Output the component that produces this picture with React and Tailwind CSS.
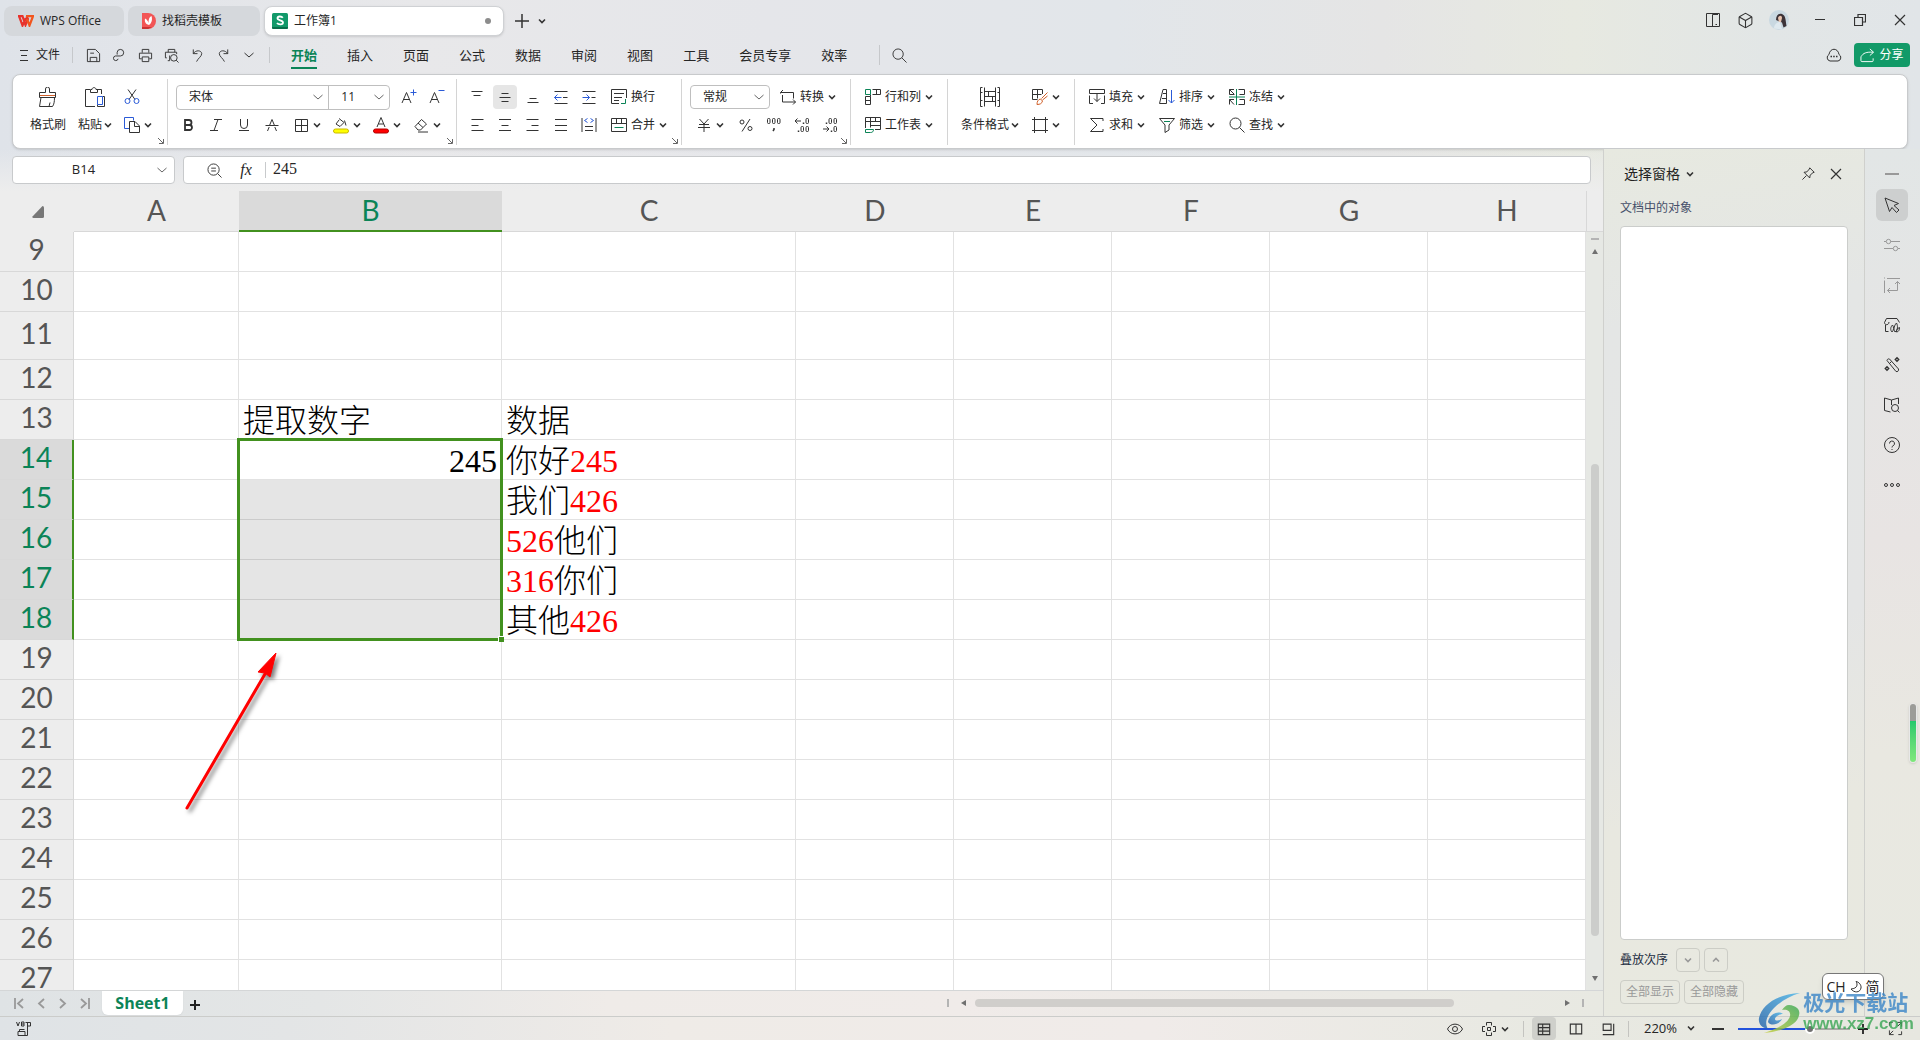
import { Box } from 'lucide-react'
import clsx from 'clsx'

const GREEN = '#0b8457'
const BLUE = '#2b5bd7'
const ORANGE = '#d1602a'

const MENUS = ['开始', '插入', '页面', '公式', '数据', '审阅', '视图', '工具', '会员专享', '效率']

const COLUMNS = [
  { id: 'A', width: 'w-[165px]' },
  { id: 'B', width: 'w-[263px]' },
  { id: 'C', width: 'w-[294px]' },
  { id: 'D', width: 'w-[158px]' },
  { id: 'E', width: 'w-[158px]' },
  { id: 'F', width: 'w-[158px]' },
  { id: 'G', width: 'w-[158px]' },
  { id: 'H', width: 'w-[158px]' },
]

const ROWS = [9, 10, 11, 12, 13, 14, 15, 16, 17, 18, 19, 20, 21, 22, 23, 24, 25, 26, 27]

const red = (t) => <span className="text-[#ff0000]">{t}</span>

const CELLS = {
  B13: '提取数字',
  C13: '数据',
  B14: '245',
  C14: <>你好{red('245')}</>,
  C15: <>我们{red('426')}</>,
  C16: <>{red('526')}他们</>,
  C17: <>{red('316')}你们</>,
  C18: <>其他{red('426')}</>,
}

// Line icons, all on a 16 unit grid unless noted.
const ICONS = {
  save: <path d="M1.5 1.5h8.5l4.5 4.5v8.5h-13zM4.500 14.500v-4.500h7v4.500M4.500 5.500h4" />,
  link: <path d="M5.500 7V4.500a3.500 3.500 0 1 1 3.500 4H3.500a2.500 2.500 0 1 0 3 3" />,
  print: <path d="M4.500 5V1.500h7V5M4 11.500H1.500V5.500h13v6H12M4.500 9.500h7v5h-7z" />,
  preview: (
    <>
      <path d="M4.500 4.500V1.500h7v3M3 10.500H1.500V4.500h12v2M4 13.500h2V8" />
      <circle cx="10.500" cy="10.500" r="3.500" />
      <path d="M13 13l2.500 2.500" />
    </>
  ),
  undo: <path d="M3.500 1.500v4.500h4.500M3.500 6C6 2 12 2 12.500 6c0 3-4 5-5.500 8.500" />,
  redo: <path d="M12.500 1.500v4.500H8M12.500 6C10 2 4 2 3.500 6c0 3 4 5 5.500 8.500" />,
  search: (
    <>
      <circle cx="6.500" cy="6.500" r="5.500" />
      <path d="M10.500 10.500l5 5" />
    </>
  ),
  cut: (
    <>
      <path d="M4 .5l7 10M12 .5L5 10.500" />
      <g stroke={BLUE}>
        <circle cx="3.500" cy="12" r="2.500" />
        <circle cx="12.500" cy="12" r="2.500" />
      </g>
    </>
  ),
  copy: (
    <>
      <path d="M5 11.500H.5V.5h9v3" stroke={BLUE} />
      <path d="M5.500 4.500h5.500l4.500 4.500v6.500h-10zM10.500 4.500v5h5" />
    </>
  ),
  fontUp: (
    <>
      <path d="M1 14L5.500 3.500 10 14M2.500 10.500h6" />
      <path d="M9.500 3.500h6M12.500 .5v6" stroke={BLUE} />
    </>
  ),
  fontDown: (
    <>
      <path d="M1 14L5.500 3.500 10 14M2.500 10.500h6" />
      <path d="M9.500 1.500h6" stroke={BLUE} />
    </>
  ),
  bold: <path strokeWidth="1.800" d="M5 3h4a2.500 2.500 0 0 1 0 5H5zM5 8h4.500a2.500 2.500 0 0 1 0 5H5z" />,
  italic: <path d="M6 2.500h8M2 13.500h8M10 2.500l-4 11" />,
  underline: <path d="M4.500 2v6a3.500 3.500 0 0 0 7 0V2M3 13.500h10" />,
  strike: <path d="M3.500 14l1.700-4M8 2.500L10.500 8.500M8 2.500L5.500 8.500M12.500 14l-1.700-4M1.500 8.500h13" />,
  borders: <path d="M2.500 2.500h12v12h-12zM8.500 2.500v12M2.500 8.500h12" />,
  fill: (
    <>
      <path d="M6 1.500l5 4-4 4-4-2.500 3-4M11.500 3.500l1.500 5" />
      <rect x=".5" y="12" width="15" height="4" rx="2" fill="#ffff00" stroke="#c9b800" />
    </>
  ),
  fontColor: (
    <>
      <path d="M4 10L8 .5 12 10M5.500 7h5" />
      <rect x=".5" y="12" width="15" height="4" rx="2" fill="#ff0000" stroke="#b00000" />
    </>
  ),
  eraser: <path d="M2 9.500L8.500 2.500l5 4.500-6 6H5zM5 6l5 4.500M5 15h10" />,
  top: <path d="M2.500 2.500h11M4.500 6.500h7" />,
  middle: <path d="M4.500 4.500h7M2.500 8.500h11M4.500 12.500h7" />,
  bottom: <path d="M4.500 9.500h7M2.500 13.500h11" />,
  outdent: (
    <>
      <path d="M1.500 2.500h13M10 8.500h4.500M1.500 14.500h13" />
      <path d="M8.500 8.500h-7M4.500 5.500l-3 3 3 3" stroke={BLUE} />
    </>
  ),
  indent: (
    <>
      <path d="M1.500 2.500h13M10.500 8.500h4M1.500 14.500h13" />
      <path d="M1.500 8.500h7M5.500 5.500l3 3-3 3" stroke={BLUE} />
    </>
  ),
  alignLeft: <path d="M2.500 2.500h12M2.500 8.500h7M2.500 13.500h12" />,
  alignCenter: <path d="M2 2.500h12M4.500 8.500h7M2 13.500h12" />,
  alignRight: <path d="M1.500 2.500h12M6.500 8.500h7M1.500 13.500h12" />,
  justify: <path d="M2 2.500h12M2 8.500h12M2 13.500h12" />,
  distribute: (
    <>
      <path d="M1 1v14M15 1v14M4 9.500h8M4 13.500h8" />
      <path d="M6.500 1.500l-3 2 3 2M9.500 1.500l3 2-3 2" stroke={BLUE} />
    </>
  ),
  wrap: (
    <>
      <path d="M8 14.500H.5V.5h15V9M3 4.500h10M3 8.500h8M3 11.500h5" />
      <path d="M14.500 10v4.500H10" stroke={GREEN} />
    </>
  ),
  merge: (
    <>
      <path d="M.5 1.500h15v13H.5zM.5 6.500h15M5.500 1.500v5M10.500 1.500v5" />
      <path d="M3.500 10.500h9" stroke={GREEN} />
    </>
  ),
  convert: <path d="M3 1L.5 3.500h13v6M.5 3.500v1M2.500 6v7h13M13 10.500l2.500 2.500L13 15.500" />,
  yen: <path d="M3.500 2L8 7l4.500-5M3 7.500h10M2 10.500h12M8 7.500V15" />,
  percent: (
    <>
      <circle cx="4" cy="5" r="2" />
      <circle cx="12" cy="11.500" r="2" />
      <path d="M12 2L4 14.500" />
    </>
  ),
  thousand: (
    <>
      <rect x="1.500" y="1.500" width="2.500" height="5" rx="1" />
      <rect x="6.500" y="1.500" width="2.500" height="5" rx="1" />
      <rect x="11.500" y="1.500" width="2.500" height="5" rx="1" />
      <path d="M8 11v1.500l-1 1.500" strokeWidth="1.500" />
    </>
  ),
  decimalUp: (
    <>
      <path d="M7 4H1M3.500 1.500L1 4l2.500 2.500" />
      <path d="M9.500 5.500v1.500M4.500 13.500v1.500" strokeWidth="1.500" />
      <rect x="12" y="1.500" width="2.500" height="5" rx="1" />
      <rect x="7" y="9.500" width="2.500" height="5" rx="1" />
      <rect x="12" y="9.500" width="2.500" height="5" rx="1" />
    </>
  ),
  decimalDown: (
    <>
      <path d="M1 12h6M4.500 9.500L7 12l-2.500 2.500" />
      <path d="M4.500 5.500v1.500M9.500 13.500v1.500" strokeWidth="1.500" />
      <rect x="7" y="1.500" width="2.500" height="5" rx="1" />
      <rect x="12" y="1.500" width="2.500" height="5" rx="1" />
      <rect x="12" y="9.500" width="2.500" height="5" rx="1" />
    </>
  ),
  rowCol: (
    <>
      <path d="M7.500 .5h8v5h-8M11.500 .5v5M.5 7.500h5v8h-5zM.5 11.500h5M5.500 5.500v2" />
      <path d="M.5 .5h5v5h-5z" stroke={GREEN} />
    </>
  ),
  worksheet: (
    <>
      <path d="M.5 11V.5h15v12H10M.5 4.500h15M5.500 .5v10M5.500 8.500h10M10.500 .5v4" />
      <path d="M.5 12.500h8c0 2-1 3-3 3h-5z" stroke={GREEN} />
    </>
  ),
  tableStyle: (
    <>
      <path d="M10.500 5V.5H.5v10h5M.5 5.500h9M5.500 .5v9" />
      <path d="M15.500 3.500l-6 6M15.500 7l-5 4M5 15.500c0-3 1-5 3.500-5.500l2 2c-.5 2.500-2.500 3.500-5.500 3.500z" stroke={ORANGE} />
    </>
  ),
  frame: <path d="M2.500 0v16M13.500 0v16M0 2.500h16M0 13.500h16" />,
  fillDown: <path d="M.5 4.500v-4h15v4M.5 4.500h15M4 14.500H.5v-8M12 14.500h3.500v-8M8 4.500v8M5 9.500l3 3 3-3" />,
  sum: <path d="M14 4V1.500H1.500L8 8l-6.500 6.500H14V12" />,
  sort: (
    <>
      <path d="M.5 14.500L4 .5h3.500v14zM4 4.500h3.500M3 9.500h4.500" />
      <path d="M12.500 1v13M9.500 11l3 3 3-3" stroke={BLUE} />
    </>
  ),
  filter: (
    <>
      <path d="M.5 1.500h15L10 8v5l-4 2.500V8z" />
      <path d="M5 4.500h6" stroke={GREEN} />
    </>
  ),
  freeze: (
    <>
      <path d="M5 .5H.5v5H5M.5 .5l5 5M5 10.500H.5v5M.5 10.500l4.500 5M9.500 .5h6v5h-5M9.500 15.500h6v-5h-5" />
      <path d="M7.500 0v16M0 8h16" stroke={GREEN} />
    </>
  ),
  panel: <path d="M1.500 1.500h13v13h-13zM7.500 14.500v-12h5.500M10.500 12.500h1.500" />,
  cloud: (
    <>
      <path d="M4 14a3.500 3.500 0 0 1-1-6.500C4 .5 12 .5 13 7.500A3.500 3.500 0 0 1 12 14z" />
      <path d="M4.500 9.500h1.500M7.200 9.500h1.500M10 9.500h1.500" strokeWidth="1.500" />
    </>
  ),
  share: <path d="M1 9v4.500a1 1 0 0 0 1 1h11a1 1 0 0 0 1-1V11M1.500 9C3 5.500 7 4 14 4.500M10.500 1l4 3.500-4 3.500" />,
  pin: <path strokeWidth="1.200" d="M9.500 1l5.500 5.500-1.500.5-3.500 3-.5 3.500L2.500 6.500 6 6l3-3.500zM5.500 10.500l-5 5" />,
  pointer: <path d="M1 1l4.500 13.500 2.500-4 4.500 5 2.500-2.500-5-4.500 4.500-2z" />,
  sliders: (
    <>
      <path d="M0 4.500h2M6.500 4.500H16M0 11.500h9M14 11.500h2" />
      <circle cx="4.500" cy="4.500" r="2.200" />
      <circle cx="11.500" cy="11.500" r="2.200" />
    </>
  ),
  resize: <path d="M3 1.500h13M.5 3.500V16M0 1h1M13.500 4.500v9h-10M11 7l2.500-2.500L16 7M6 11l-2.500 2.500L6 16" />,
  store: (
    <>
      <path d="M1.500 8v6.500h3M.5 5.500L2.500 1.500h10.500l2.500 4M.5 5.500c0 3 4.500 3 4.500-.5" />
      <path d="M8.500 8c-2 2-2.500 5-.5 7 2-2 2-5 .5-7zM12.500 6c-2 2-3.500 6-1.500 9 3-2 3-6 1.500-9zM15.500 10.500c-2 .5-3 2.500-3 4.500 2 0 3-2 3-4.500z" />
    </>
  ),
  wand: (
    <>
      <path d="M3 3.500a1.800 1.800 0 0 1 2.500-1.500l9 10c.5 2-1 3-2.500 2.500zM5.500 6.500l2-2" />
      <path d="M13 .8l1.700 1.700-1.700 1.700-1.700-1.700zM3 9.800l1.700 1.700L3 13.200l-1.700-1.700z" strokeWidth="1.400" />
    </>
  ),
  book: (
    <>
      <path d="M6.500 15l-6-1.500V1l7 2 7-2v6M7.500 3v5" />
      <circle cx="11" cy="11" r="3.500" />
      <path d="M13.500 13.500l2 2" />
    </>
  ),
  help: (
    <>
      <circle cx="8" cy="8" r="7.500" />
      <path d="M5.500 6.500a2.500 2.500 0 1 1 3.500 2.300c-.7.400-1 .7-1 1.700M8 12v1" />
    </>
  ),
  more: (
    <>
      <circle cx="2" cy="8" r="1.500" />
      <circle cx="8" cy="8" r="1.500" />
      <circle cx="14" cy="8" r="1.500" />
    </>
  ),
  zoomOut: (
    <>
      <circle cx="7" cy="7" r="6" />
      <path d="M4.500 5.500h5M4.500 8.500h5M11.500 11.500l4 4" />
    </>
  ),
  macro: <path d="M.5 1l1.500 4 1.500-4M5.500 1v4H8V1zM5.500 3H8M9.500 1.500h5V5H12M11.500 2v12.500H2v-4h7v4M3.500 10.500v-2h5" />,
  eye: (
    <>
      <path d="M.5 8C3.500 1.500 12.500 1.500 15.500 8 12.500 14.500 3.500 14.500 .5 8z" />
      <circle cx="8" cy="8" r="2.500" />
    </>
  ),
  reading: <path d="M5.500 4.500v-3h5v3M5.500 11.500v3h5v-3M4 5.500H1.500v5H4M12 5.500h2.500v5H12M6.500 6.500h3v3h-3z" />,
  normal: <path strokeWidth="1.300" d="M1.500 2.500h13v12h-13zM1.500 6.500h13M6.500 2.500v12M1.500 10.500h13" />,
  pageView: <path strokeWidth="1.300" d="M1.500 2.500h13v11h-13zM8 2.500v11" />,
  breakView: <path strokeWidth="1.300" d="M2.500 2.500h9v7h-9zM14.500 2v12.500H2" />,
  full: <path d="M10 1.500h4.500V6M14.500 1.500l-4 4M6 14.500H1.500V10M1.500 14.500l4-4M1.500 5V1.500H5M14.500 11v3.500H11" />,
}

function Icon({ name, size = 'size-4', color = '#333' }) {
  return (
    <svg viewBox="0 0 16 16" className={clsx('shrink-0 overflow-visible', size)} fill="none" stroke={color}>
      {ICONS[name]}
    </svg>
  )
}

function Chevron({ thin, up, color = '#333' }) {
  const d = up ? 'M1 5.500l3-3 3 3' : 'M1 2.500l3 3 3-3'
  return (
    <svg viewBox="0 0 8 8" className="size-2 shrink-0 overflow-visible" fill="none" stroke={color} strokeWidth={thin ? 1 : 1.6}>
      <path d={thin ? 'M-.5 2l4.500 4 4.500-4' : d} />
    </svg>
  )
}

function Tool({ name, label, text, menu, className }) {
  return (
    <button aria-label={label || text} className={clsx('flex h-7 items-center gap-1 whitespace-nowrap', className)}>
      <Icon name={name} />
      {text}
      {menu && <Chevron />}
    </button>
  )
}

function Cell28({ name, label, active }) {
  return (
    <button
      aria-label={label}
      className={clsx('mx-0.5 flex size-6 items-center justify-center rounded', active && 'bg-[#e6e6e6]')}
    >
      <Icon name={name} />
    </button>
  )
}

function Group({ children, className, corner }) {
  return (
    <div className={clsx('relative flex h-[66px] shrink-0 border-r border-[#d4d4d4] pt-1', className)}>
      {children}
      {corner && (
        <button aria-label="更多设置" className="absolute right-0.5 bottom-0 flex size-2">
          <svg viewBox="0 0 8 8" className="size-2" fill="none" stroke="#666">
            <path d="M1 1l5 5M6.500 2v4.500H2" />
          </svg>
        </button>
      )}
    </div>
  )
}

function Select({ label, value, className }) {
  return (
    <div className={clsx('relative flex h-6 items-center', className)}>
      <select aria-label={label} className="h-full w-full appearance-none bg-transparent pl-3 text-xs outline-none">
        <option>{value}</option>
      </select>
      <span className="pointer-events-none absolute right-1.5 flex">
        <Chevron thin color="#666" />
      </span>
    </div>
  )
}

function TitleBar() {
  return (
    <div className="flex h-9 items-end">
      <div className="flex h-[30px] gap-1 pl-1">
        <button className="flex w-[120px] items-center gap-1.5 rounded-lg bg-[#d5d8dc] pl-3.5">
          <svg viewBox="0 0 16 12" className="h-3 w-4" fill="none" strokeWidth="2.200">
            <path d="M0 1.200h4.500L7.500 10 10 4l-1.500-2.800M1 1l3.500 9.500L8 3" stroke="#e8322c" />
            <path d="M8 1.200h7L11.500 10.500 9 4" stroke="#f2551d" />
          </svg>
          WPS Office
        </button>
        <button className="flex w-[132px] items-center gap-1.5 rounded-lg bg-[#d5d8dc] pl-3.5">
          <svg viewBox="0 0 14 16" className="h-4 w-3.5">
            <path d="M0 0h6a8 8 0 0 1 0 16H0z" fill="#f25555" />
            <path d="M0 14h10l-4 2H0z" fill="#c93232" />
            <path d="M7 12C3 11 2.500 8 3 5.500 5 6.500 6 8 6.500 10 6.500 7 7 4 9.500 3c1 3 .5 7-2.500 9z" fill="#fff" />
          </svg>
          找稻壳模板
        </button>
        <div className="flex w-[240px] items-center gap-1.5 rounded-lg border border-[#cfd1d4] bg-white pr-3 pl-[7px] shadow-sm">
          <svg viewBox="0 0 16 16" className="size-4">
            <rect width="16" height="16" rx="1.500" fill="#12996a" />
            <path d="M0 14h16v.5a1.500 1.500 0 0 1-1.500 1.500h-13A1.500 1.500 0 0 1 0 14.500z" fill="#0a6e4b" />
            <path d="M10.800 4.800C9.500 3 5.500 3 5.500 5.300c0 2.500 5.500 1.500 5.500 4.200 0 2.500-4.500 2.500-6 .5" fill="none" stroke="#fff" strokeWidth="1.800" />
          </svg>
          <span>工作簿1</span>
          <span className="ml-auto size-1.5 rounded-full bg-[#8c8c8c]" />
        </div>
      </div>
      <div className="flex h-[30px] items-center pl-[11px]">
        <button aria-label="新建标签">
          <svg viewBox="0 0 14 14" className="size-3.5" stroke="#333" strokeWidth="1.500">
            <path d="M7 0v14M0 7h14" />
          </svg>
        </button>
        <button aria-label="标签列表" className="ml-[9px]">
          <Chevron />
        </button>
      </div>
      <div className="ml-auto flex h-8 items-center">
        <button aria-label="分屏" className="flex w-8 justify-center">
          <Icon name="panel" />
        </button>
        <button aria-label="应用" className="flex w-8 justify-center">
          <Box size={17} strokeWidth={1.5} color="#333" />
        </button>
        <button aria-label="账户" className="flex w-9 justify-center">
          <svg viewBox="0 0 20 20" className="size-5">
            <circle cx="10" cy="10" r="10" fill="#c9d8e1" />
            <path d="M7 10C7 5 10 3 13 4c3.500 1.500 3.500 5 4.500 12l-3 1.500-1.500-5z" fill="#3c3338" />
            <path d="M9 8c1-3 4-3 4 0l-1 4-2 .5z" fill="#e8c4b0" />
            <path d="M5 18.500c0-4 3-6.500 6-6.500l2 7.500z" fill="#dfe9ef" />
          </svg>
        </button>
        <button aria-label="最小化" className="ml-[3px] flex w-10 justify-center">
          <svg viewBox="0 0 10 10" className="size-2.5" stroke="#333"><path d="M0 4.500h10" /></svg>
        </button>
        <button aria-label="还原" className="flex w-10 justify-center">
          <svg viewBox="0 0 12 12" className="size-3" fill="none" stroke="#333" strokeWidth="1.200">
            <path d="M.5 3.500h8v8h-8zM4 3.500v-3h7.500v7.500h-3" />
          </svg>
        </button>
        <button aria-label="关闭" className="flex w-10 justify-center">
          <CloseIcon />
        </button>
      </div>
    </div>
  )
}

function CloseIcon() {
  return (
    <svg viewBox="0 0 10 10" className="size-2.5 overflow-visible" stroke="#333" strokeWidth="1.200">
      <path d="M0 0l10 10M10 0L0 10" />
    </svg>
  )
}

function MenuBar() {
  const quick = [
    ['save', '保存'],
    ['link', '输出'],
    ['print', '打印'],
    ['preview', '打印预览'],
    ['undo', '撤销'],
    ['redo', '恢复'],
  ]
  return (
    <div className="flex h-[38px] items-center pr-2.5 pl-5">
      <button className="flex items-center gap-2">
        <svg viewBox="0 0 8 12" className="h-3 w-2" stroke="#333"><path d="M0 1.500h8M1 6.500h6M0 11.500h8" /></svg>
        文件
      </button>
      <span className="ml-3 h-4 w-px bg-[#c6c8cb]" />
      <div className="ml-[7px] flex">
        {quick.map(([name, label]) => (
          <button key={name} aria-label={label} className="flex w-[26px] justify-center">
            <Icon name={name} size="size-[15px]" />
          </button>
        ))}
        <button aria-label="自定义" className="flex w-[26px] items-center justify-center">
          <Chevron thin />
        </button>
      </div>
      <span className="ml-[7px] h-4 w-px bg-[#c6c8cb]" />
      <nav className="ml-[21px] flex gap-[30px] text-[13px] leading-5">
        {MENUS.map((m, i) => (
          <button
            key={m}
            className={clsx('border-b-2 pt-1 pb-0.5', i === 0 ? 'border-[#0b8457] font-bold text-[#0b8457]' : 'border-transparent')}
          >
            {m}
          </button>
        ))}
      </nav>
      <span className="ml-8 h-5 w-px bg-[#c6c8cb]" />
      <button aria-label="搜索" className="ml-3">
        <Icon name="search" size="size-[15px]" />
      </button>
      <div className="ml-auto flex items-center gap-3">
        <button aria-label="云同步"><Icon name="cloud" /></button>
        <button className="flex h-6 w-14 items-center justify-center gap-1 rounded bg-[#129a68] text-white">
          <Icon name="share" color="#fff" size="size-[15px]" />
          分享
        </button>
      </div>
    </div>
  )
}

function Ribbon() {
  return (
    <div className="mx-3 flex h-[75px] items-start overflow-hidden rounded-lg border border-[#c8cacc] bg-white pt-1 shadow">
      <Group corner className="w-[155px] pl-[17px]">
        <button className="flex w-9 flex-col items-center whitespace-nowrap">
          <svg viewBox="0 0 20 20" className="m-1 size-5" fill="none" stroke="#333">
            <path d="M1.500 5.500h6V2a2 2 0 0 1 4 0v3.500h6v5h-16zM3 10.500L1.500 19.500h13c1.500-2 2-5 2-9M11 19.500l1-4" />
            <path d="M2 8.500h15" stroke={ORANGE} />
          </svg>
          <span className="leading-7">格式刷</span>
        </button>
        <button className="ml-3 flex w-[34px] flex-col items-center whitespace-nowrap">
          <svg viewBox="0 0 20 20" className="m-1 size-5" fill="none" stroke="#333">
            <path d="M5 2.500H.5v17H10M12 2.500h4.500V7M5.500 5.500v-3H7c0-2.500 4-2.500 4 0h1.500v3z" />
            <path d="M17.500 9.500h2v10h-7v-2" />
            <path d="M12.500 9.500h5v8h-5z" stroke={BLUE} />
          </svg>
          <span className="flex items-center gap-0.5 leading-7">粘贴<Chevron /></span>
        </button>
        <div className="ml-3 flex flex-col">
          <Tool name="cut" label="剪切" />
          <Tool name="copy" label="复制" menu />
        </div>
      </Group>

      <Group corner className="w-[289px] flex-col pl-1.5">
        <div className="flex h-7 items-center">
          <div className="ml-0.5 flex h-[25px] w-[214px] items-center rounded border border-[#bfbfbf]">
            <Select label="字体" value="宋体" className="w-[152px]" />
            <Select label="字号" value="11" className="w-[61px] border-l border-[#bfbfbf]" />
          </div>
          <span className="w-[5px]" />
          <Cell28 name="fontUp" label="增大字号" />
          <Cell28 name="fontDown" label="减小字号" />
        </div>
        <div className="flex h-7 items-center">
          <Cell28 name="bold" label="加粗" />
          <Cell28 name="italic" label="倾斜" />
          <Cell28 name="underline" label="下划线" />
          <Cell28 name="strike" label="删除线" />
          <div className="ml-[7px] flex gap-3">
            <Tool name="borders" label="边框" menu />
            <Tool name="fill" label="填充颜色" menu />
            <Tool name="fontColor" label="字体颜色" menu />
            <Tool name="eraser" label="清除" menu />
          </div>
        </div>
      </Group>

      <Group corner className="w-[225px] flex-col pl-1.5">
        <div className="flex h-7 items-center">
          <Cell28 name="top" label="顶端对齐" />
          <Cell28 name="middle" label="垂直居中" active />
          <Cell28 name="bottom" label="底端对齐" />
          <Cell28 name="outdent" label="减少缩进" />
          <Cell28 name="indent" label="增加缩进" />
          <Tool name="wrap" text="换行" className="ml-2" />
        </div>
        <div className="flex h-7 items-center">
          <Cell28 name="alignLeft" label="左对齐" />
          <Cell28 name="alignCenter" label="水平居中" />
          <Cell28 name="alignRight" label="右对齐" />
          <Cell28 name="justify" label="两端对齐" />
          <Cell28 name="distribute" label="分散对齐" />
          <Tool name="merge" text="合并" menu className="ml-2" />
        </div>
      </Group>

      <Group corner className="w-[169px] flex-col pl-2">
        <div className="flex h-7 items-center">
          <Select label="数字格式" value="常规" className="w-20 rounded border border-[#bfbfbf]" />
          <Tool name="convert" text="转换" menu className="ml-2.5" />
        </div>
        <div className="flex h-7 items-center">
          <Tool name="yen" label="货币" menu className="ml-1.5" />
          <span className="w-2" />
          <Cell28 name="percent" label="百分比" />
          <Cell28 name="thousand" label="千位分隔" />
          <Cell28 name="decimalUp" label="增加小数位" />
          <Cell28 name="decimalDown" label="减少小数位" />
        </div>
      </Group>

      <Group className="w-[97px] flex-col pl-3.5">
        <Tool name="rowCol" text="行和列" menu />
        <Tool name="worksheet" text="工作表" menu />
      </Group>

      <Group className="w-[127px] pl-[13px]">
        <button className="flex w-[58px] flex-col items-center whitespace-nowrap">
          <svg viewBox="0 0 20 20" className="m-1 size-5" fill="none" stroke="#333">
            <path d="M2.500 .5h-2v19h2M17.500 .5h2v19h-2M.5 5.500h2M17.500 5.500h2M.5 13.500h2M17.500 13.500h2M4.500 .5v19M15.500 .5v19M4.500 4.500h11M4.500 9.500h11M4.500 14.500h11M8.500 4.500v5M12.500 9.500v5" />
          </svg>
          <span className="flex items-center gap-0.5 leading-7">条件格式<Chevron /></span>
        </button>
        <div className="ml-[13px] flex flex-col">
          <Tool name="tableStyle" label="表格样式" menu />
          <Tool name="frame" label="单元格样式" menu />
        </div>
      </Group>

      <div className="grid h-[66px] grid-cols-3 content-start gap-x-3.5 pt-1 pl-3.5">
        <Tool name="fillDown" text="填充" menu />
        <Tool name="sort" text="排序" menu />
        <Tool name="freeze" text="冻结" menu />
        <Tool name="sum" text="求和" menu />
        <Tool name="filter" text="筛选" menu />
        <Tool name="search" text="查找" menu />
      </div>
    </div>
  )
}

function FormulaBar() {
  return (
    <div className="flex h-[42px] shrink-0 gap-2 bg-linear-to-b from-transparent to-[#ededed] pt-[7px] pr-3 pl-3">
      <div className="relative flex h-7 w-[163px] items-center rounded border border-[#c8cacc] bg-white">
        <input aria-label="名称框" defaultValue="B14" className="w-full pr-5 text-center text-[13px] outline-none" />
        <span className="absolute right-2 flex"><Chevron thin color="#666" /></span>
      </div>
      <div className="flex h-7 flex-1 items-center rounded border border-[#c8cacc] bg-white pl-[23px]">
        <button aria-label="浏览公式结果"><Icon name="zoomOut" size="size-[15px]" /></button>
        <button aria-label="插入函数" className="ml-4 w-4 font-['Liberation_Serif',serif] text-base leading-5 italic">fx</button>
        <span className="ml-[11px] h-4 w-px bg-[#c8cacc]" />
        <input
          aria-label="编辑栏"
          defaultValue="245"
          className="ml-[7px] min-w-0 flex-1 pb-0.5 font-['Liberation_Serif',serif] text-base leading-5 outline-none"
        />
      </div>
    </div>
  )
}

function Cell({ col, row }) {
  const id = col + row
  const shaded = col === 'B' && row > 14 && row <= 18
  return (
    <td
      className={clsx(
        'relative border-r border-b px-1 pt-[3px] pb-0 align-middle whitespace-nowrap',
        shaded ? 'border-[#cbcbcb] bg-[#e5e5e5]' : 'border-[#e2e2e2]',
        id === 'B14' && 'text-right',
      )}
    >
      {CELLS[id]}
      {id === 'B14' && (
        <span className="pointer-events-none absolute -top-0.5 -left-0.5 z-10 h-[203px] w-[266px] border-[3px] border-[#42911f]">
          <span className="absolute -right-1 -bottom-1 size-1.5 border-t border-l border-white bg-[#42911f]" />
        </span>
      )}
    </td>
  )
}

function Grid() {
  return (
    <div className="relative min-w-0 flex-1 overflow-hidden bg-white">
      <table className="w-[1586px] table-fixed border-separate border-spacing-0 font-['Liberation_Serif','Noto_Sans_CJK_SC',serif] text-[32px] leading-9 font-light text-black">
        <thead className="font-['Lato',sans-serif] text-[28px] font-normal">
          <tr className="h-[41px] bg-[#ededed]">
            <th className="w-[74px]">
              <svg viewBox="0 0 12 12" className="ml-8 size-3"><path d="M10.500 0Q12 0 12 1.500v9Q12 12 10.500 12h-9Q0 12 .5 10.500z" fill="#777" /></svg>
            </th>
            {COLUMNS.map(({ id, width }) => (
              <th
                key={id}
                className={clsx(
                  'p-0 pb-0.5 font-normal',
                  width,
                  id === 'B' ? 'border-b-2 border-[#42911f] bg-[#dadada] text-[#0b8457]' : 'border-b border-[#d8d8d8] text-[#555]',
                )}
              >
                {id}
              </th>
            ))}
          </tr>
        </thead>
        <tbody>
          {ROWS.map((row) => {
            const active = row >= 14 && row <= 18
            return (
              <tr key={row} className={row === 11 ? 'h-12' : 'h-10'}>
                <th
                  scope="row"
                  className={clsx(
                    "border-b border-b-[#d8d8d8] p-0 pb-1.5 font-['Lato',sans-serif] text-[28px] leading-8 font-normal",
                    active
                      ? 'border-r-2 border-r-[#42911f] bg-[#dadada] text-[#0b8457]'
                      : 'border-r border-r-[#d8d8d8] bg-[#ededed] text-[#555]',
                  )}
                >
                  {row}
                </th>
                {COLUMNS.map(({ id }) => (
                  <Cell key={id} col={id} row={row} />
                ))}
              </tr>
            )
          })}
        </tbody>
      </table>

      {/* callout arrow drawn over the cells */}
      <svg
        viewBox="0 0 100 170"
        className="pointer-events-none absolute top-[458px] left-[182px] h-[170px] w-[100px] drop-shadow-[3px_3px_2px_rgba(0,0,0,0.5)]"
      >
        <path d="M5 159L83 25" stroke="#ff0000" strokeWidth="3" strokeLinecap="round" />
        <path d="M94 4L76 23l7 1 5 4z" fill="#ff0000" stroke="#ff0000" />
      </svg>
    </div>
  )
}

function Triangle({ d }) {
  return (
    <svg viewBox="0 0 6 6" className="size-1.5 shrink-0" fill="#707070">
      <path d={d} />
    </svg>
  )
}

function VerticalScroll() {
  return (
    <div className="flex w-[17px] shrink-0 flex-col items-center bg-[#e6e8e4] pb-2">
      <div className="h-[41px] w-full border-b border-l border-[#d8d8d8] bg-[#ededed]" />
      <span className="mt-1.5 h-0.5 w-2 bg-[#b4b4b4]" />
      <span className="mt-2 flex"><Triangle d="M3 1l3 5H0z" /></span>
      <div className="flex min-h-0 w-2 flex-1 flex-col py-2">
        <span className="flex-[3_1_0%]" />
        <span className="flex-[7_1_0%] rounded-full bg-[#cccdcb]" />
        <span className="h-8" />
      </div>
      <Triangle d="M3 5L0 0h6z" />
    </div>
  )
}

function SheetTabs() {
  const nav = 'M7 1L2 5.500 7 10'
  const next = 'M2 1l5 4.500L2 10'
  const arrows = [
    ['第一个', `${nav}M-1 0v11`],
    ['上一个', nav],
    ['下一个', next],
    ['最后一个', `${next}M10 0v11`],
  ]
  return (
    <div className="flex h-[26px] shrink-0 items-start border-t border-[#d4d6d7] bg-[linear-gradient(90deg,#dfe3e5,#e4e6e6_20%,#efebe8_38%,#f0ebe9_60%,#ebe9e5_80%,#e8e9e2)]">
      <div className="flex h-6 items-center gap-3 pl-4">
        {arrows.map(([label, d]) => (
          <button key={label} aria-label={label}>
            <svg viewBox="0 0 9 11" className="h-[11px] w-[9px] overflow-visible" fill="none" stroke="#999" strokeWidth="1.800">
              <path d={d} />
            </svg>
          </button>
        ))}
      </div>
      <button className="ml-3.5 h-6 w-[81px] rounded-b-md bg-white text-base leading-6 font-bold text-[#0b8457] shadow-xs">
        Sheet1
      </button>
      <button aria-label="新建工作表" className="ml-[7px] flex h-6 items-center pt-1">
        <svg viewBox="0 0 10 10" className="size-2.5" stroke="#222" strokeWidth="2"><path d="M5 0v10M0 5h10" /></svg>
      </button>
      <div className="ml-auto flex h-6 w-[656px] items-center">
        <span className="h-2 w-0.5 bg-[#b4b4b4]" />
        <span className="ml-3 flex"><Triangle d="M5 0v6L0 3z" /></span>
        <span className="ml-2 h-2 w-[479px] rounded-full bg-[#d0cecb]" />
        <span className="ml-auto flex"><Triangle d="M1 0v6l5-3z" /></span>
        <span className="mr-[19px] ml-3 h-2 w-0.5 bg-[#b4b4b4]" />
      </div>
    </div>
  )
}

function SelectionPane() {
  const small = 'flex size-6 items-center justify-center rounded border border-[#cccdc6]'
  const wide = 'h-6 w-[60px] rounded border border-[#cccdc6] text-[#999]'
  return (
    <aside className="flex w-[261px] shrink-0 flex-col border-l border-[#cfd0cd] bg-[linear-gradient(170deg,#e7e9e0,#e4e6e5_20%,#e4e5e5_55%,#e8e8e0_75%,#e8e9e0)] pr-4 pb-3 pl-4">
      <div className="flex h-12 items-center pt-px pl-1 text-sm text-[#222]">
        <button className="flex items-center gap-1.5">选择窗格<Chevron /></button>
        <button aria-label="固定" className="ml-auto"><Icon name="pin" size="size-[13px]" /></button>
        <button aria-label="关闭窗格" className="mr-[7px] ml-4"><CloseIcon /></button>
      </div>
      <h2 className="h-[29px] pt-[3px] text-[#46506a]">文档中的对象</h2>
      <div className="min-h-0 flex-1 rounded border border-[#cbcdcb] bg-white" />
      <div className="mt-2 flex h-6 items-center gap-1 text-[#222c40]">
        叠放次序
        <button aria-label="下移" className={clsx(small, 'ml-1')}><Chevron color="#999" /></button>
        <button aria-label="上移" className={small}><Chevron up color="#999" /></button>
      </div>
      <div className="mt-2 flex gap-1">
        <button className={wide}>全部显示</button>
        <button className={wide}>全部隐藏</button>
      </div>
    </aside>
  )
}

function SideRail() {
  const items = [
    ['sliders', '属性', '#999'],
    ['resize', '尺寸', '#999'],
    ['store', '稻壳资源'],
    ['wand', '美化'],
    ['book', '查阅'],
    ['help', '帮助'],
    ['more', '更多'],
  ]
  return (
    <div className="relative flex w-14 shrink-0 flex-col items-center gap-2 border-l border-[#cfd0cd] bg-[linear-gradient(180deg,#e2e6e6,#e8e4e3_45%,#e9e8e1_70%,#e8e9e1)] pr-px">
      <span className="mt-6 mb-1.5 h-0.5 w-3.5 bg-[#999]" />
      <button aria-label="选择" className="flex size-8 items-center justify-center rounded-md bg-[#cdcfcf]">
        <Icon name="pointer" />
      </button>
      {items.map(([name, label, color]) => (
        <button key={name} aria-label={label} className="flex size-8 items-center justify-center">
          <Icon name={name} color={color} />
        </button>
      ))}
      <div className="absolute right-[3px] bottom-[253px] flex h-[60px] w-2 flex-col overflow-hidden rounded-full border border-[#e8e8e8] shadow">
        <span className="h-[17px] bg-[#9c9c98]" />
        <span className="flex-1 bg-linear-to-b from-[#22c96d] to-[#7ee87b]" />
      </div>
    </div>
  )
}

function StatusBar() {
  return (
    <footer className="flex h-6 shrink-0 items-center border-t border-[#cbccca] bg-[linear-gradient(90deg,#dfe3e6,#e3e5e6_15%,#efebe7_35%,#f0ebe9_60%,#e8e9e2_80%,#e7e7e0)] pl-4">
      <button aria-label="宏"><Icon name="macro" /></button>
      <div className="ml-auto flex items-center pr-[17px]">
        <button aria-label="护眼模式"><Icon name="eye" /></button>
        <button aria-label="阅读模式" className="ml-[18px] flex items-center gap-1">
          <Icon name="reading" />
          <Chevron />
        </button>
        <span className="ml-3.5 h-4 w-px bg-[#c4c4c0]" />
        <div className="ml-2 flex gap-2">
          <button aria-label="普通视图" className="flex h-[23px] w-6 items-center justify-center rounded bg-[#cfd0cb]">
            <Icon name="normal" size="size-3.5" />
          </button>
          <button aria-label="页面布局" className="flex h-[23px] w-6 items-center justify-center">
            <Icon name="pageView" size="size-3.5" />
          </button>
          <button aria-label="分页预览" className="flex h-[23px] w-6 items-center justify-center">
            <Icon name="breakView" size="size-3.5" />
          </button>
        </div>
        <span className="ml-2 h-4 w-px bg-[#c4c4c0]" />
        <button className="ml-[15px] flex items-center text-[13px]">
          <span className="w-[43px] text-left">220%</span>
          <Chevron />
        </button>
        <button aria-label="缩小" className="ml-[17px] h-0.5 w-3 bg-[#333]" />
        <input
          type="range"
          aria-label="显示比例"
          min="0"
          max="100"
          defaultValue="66"
          className="ml-3.5 h-0.5 w-28 appearance-none bg-[linear-gradient(90deg,#2352dc_66%,#a9aaa6_66%)] [&::-webkit-slider-thumb]:size-2.5 [&::-webkit-slider-thumb]:appearance-none [&::-webkit-slider-thumb]:rounded-full [&::-webkit-slider-thumb]:border-2 [&::-webkit-slider-thumb]:border-white [&::-webkit-slider-thumb]:bg-[#707070]"
        />
        <button aria-label="放大" className="ml-2">
          <svg viewBox="0 0 10 10" className="size-2.5" stroke="#222" strokeWidth="1.800"><path d="M5 0v10M0 5h10" /></svg>
        </button>
        <button aria-label="全屏" className="ml-5"><Icon name="full" size="size-[15px]" /></button>
      </div>
    </footer>
  )
}

function Watermark() {
  return (
    <div className="pointer-events-none absolute right-1.5 bottom-1.5 z-20 flex items-end gap-px opacity-80">
      <svg viewBox="0 0 44 42" className="h-[42px] w-11">
        <defs>
          <linearGradient id="wm-blue" x1="0" y1="1" x2="1" y2="0">
            <stop offset="0" stopColor="#1f5fa8" />
            <stop offset="1" stopColor="#45b4ea" />
          </linearGradient>
          <linearGradient id="wm-green" x1="0" y1="1" x2="1" y2="0">
            <stop offset="0" stopColor="#c9cf3a" />
            <stop offset="1" stopColor="#35a852" />
          </linearGradient>
        </defs>
        <path d="M42 1C20 2 4 12 1 26c-1 6 3 10 9 11-4-6-1-14 6-21C23 9 32 4 42 1z" fill="url(#wm-blue)" />
        <path d="M31 13c10 1 13 7 8 15C34 35 20 40 6 41c12-4 24-9 26-17 1-5-3-7-8-6 2-3 4-5 7-5z" fill="url(#wm-green)" />
        <path d="M25 22c-6-4-14 1-15 8 3 5 12 2 14-3-3 2-7 2-7 0s4-5 8-5z" fill="url(#wm-blue)" />
      </svg>
      <div className="flex flex-col">
        <span className="text-[21px] leading-6 font-bold whitespace-nowrap text-[#3b86c8]">极光下载站</span>
        <span className="font-['Liberation_Sans',sans-serif] text-[17px] leading-5 font-bold text-[#3aa655]">www.xz7.com</span>
      </div>
    </div>
  )
}

export default function App() {
  return (
    <div className="relative flex h-screen flex-col overflow-hidden bg-[linear-gradient(90deg,#dfe3e9,#e8e8ea_22%,#e5e6ea_40%,#e2e6ea_58%,#e5e5e5_72%,#e7e9e1_82%,#e2e6e6_92%,#e1e5e8)] font-['Open_Sans','Noto_Sans_CJK_SC',sans-serif] text-xs text-[#262626]">
      <TitleBar />
      <MenuBar />
      <Ribbon />
      <main className="flex min-h-0 flex-1">
        <div className="flex min-w-0 flex-1 flex-col">
          <FormulaBar />
          <div className="flex min-h-0 flex-1">
            <Grid />
            <VerticalScroll />
          </div>
          <SheetTabs />
        </div>
        <SelectionPane />
        <SideRail />
      </main>
      <StatusBar />

      <div className="absolute right-9 bottom-10 z-10 flex h-[27px] w-[62px] items-center justify-center gap-1 rounded-md border border-[#777] bg-white text-sm whitespace-nowrap shadow-md">
        CH
        <svg viewBox="0 0 12 12" className="size-3" fill="none" stroke="#333">
          <path d="M6 .5c2 3 1.500 7-5 7.500 3 4 9 4 10-1C11.500 4 9 1 6 .5z" />
        </svg>
        简
      </div>
      <Watermark />
    </div>
  )
}
